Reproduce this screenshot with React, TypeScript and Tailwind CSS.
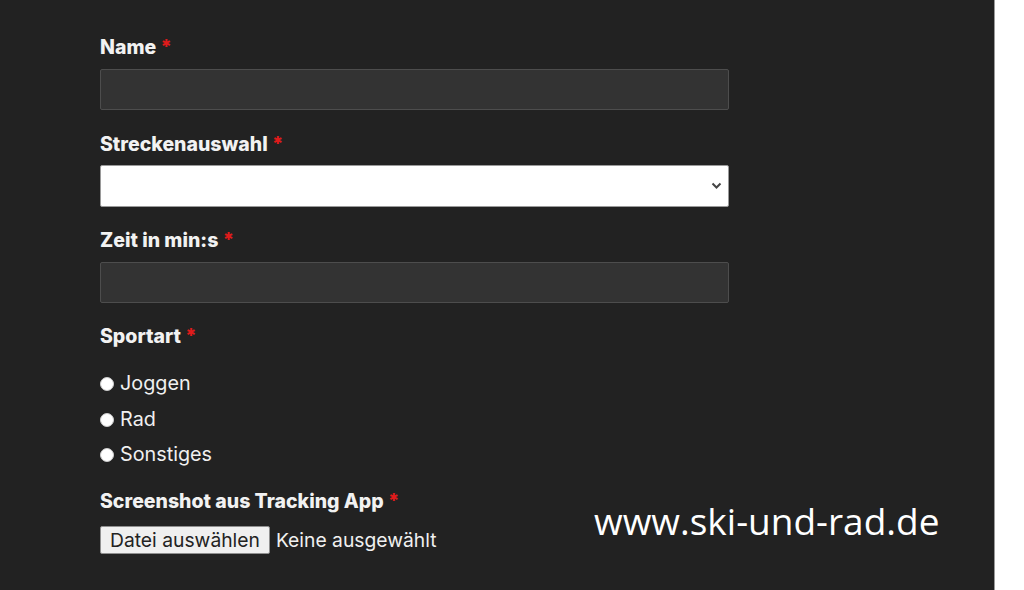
import React from "react";

const Label = ({ text }: { text: string }) => (
  <div className="h-6 leading-6 text-[19.5px] font-extrabold tracking-[0px] text-[#f2f2f2]">
    {text} <span className="text-[#e01b1b]">*</span>
  </div>
);

const Radio = ({ text }: { text: string }) => (
  <label className="flex items-center h-[24px] gap-[6px] text-[19.8px] text-[#f0f0f0]">
    <span className="w-[14px] h-[14px] rounded-full bg-white border border-[#ccc]" />
    {text}
  </label>
);

export default function App() {
  return (
    <div className="w-[1024px] h-[590px] flex bg-white overflow-hidden" style={{ fontFamily: "Inter, 'Noto Sans', sans-serif" }}>
      <div className="w-[995px] h-full bg-[#222222] border-r border-[#9a9a9a] relative">
        <form className="w-[729px] pl-[100px] pt-[35px] flex flex-col">
          <Label text="Name" />
          <input className="mt-[10px] h-[41px] w-full bg-[#333333] border border-[#4d4d4d] rounded-[2px]" />

          <div className="mt-[22px]">
            <Label text="Streckenauswahl" />
          </div>
          <div className="mt-[9px] h-[42px] w-full bg-white border border-[#9a9a9a] rounded-[2px] flex items-center justify-end pr-[6px]">
            <svg width="11" height="8" viewBox="0 0 11 8">
              <path d="M1.5 1.5 L5.5 5.5 L9.5 1.5" stroke="#444" strokeWidth="2" fill="none" />
            </svg>
          </div>

          <div className="mt-[21px]">
            <Label text="Zeit in min:s" />
          </div>
          <input className="mt-[10px] h-[41px] w-full bg-[#333333] border border-[#4d4d4d] rounded-[2px]" />

          <div className="mt-[21px]">
            <Label text="Sportart" />
          </div>
          <div className="mt-[24px] flex flex-col gap-[11.5px]">
            <Radio text="Joggen" />
            <Radio text="Rad" />
            <Radio text="Sonstiges" />
          </div>

          <div className="mt-[22px]">
            <Label text="Screenshot aus Tracking App" />
          </div>
          <div className="mt-[13px] flex items-center gap-[6px] text-[19.3px]">
            <span className="h-[28px] px-[9px] flex items-center bg-[#efefef] border border-[#8f8f8f] text-[#222] rounded-[2px]">
              Datei auswählen
            </span>
            <span className="text-[#f0f0f0]">Keine ausgewählt</span>
          </div>
        </form>
        <div
          className="absolute left-[594px] top-[499px] text-[37px] text-white leading-[44px]"
          style={{ fontFamily: "'Open Sans', sans-serif" }}
        >
          www.ski-und-rad.de
        </div>
      </div>
    </div>
  );
}
